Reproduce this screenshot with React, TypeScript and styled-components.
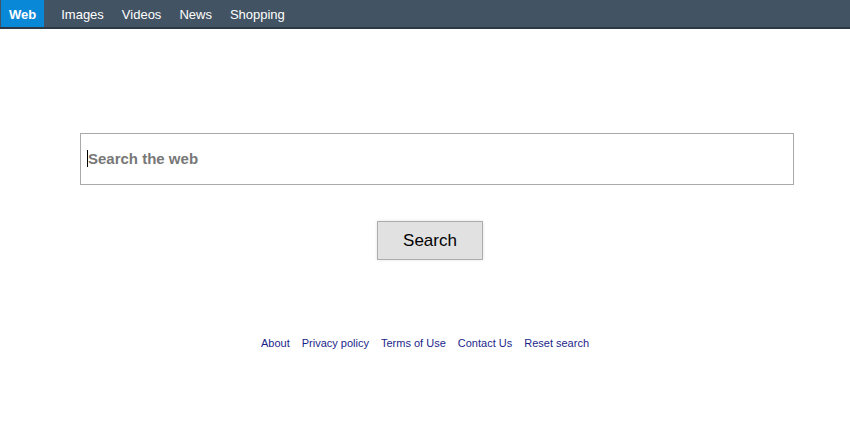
import React from 'react'
import styled, {createGlobalStyle} from 'styled-components'

const Global = createGlobalStyle`
    body {
        margin: 0;
        background: #fff;
        font-family: "Liberation Sans", Arial, sans-serif;
    }
`

const NavBar = styled.nav`
    display: flex;
    align-items: stretch;
    height: 27px;
    background: #425363;
    border-bottom: 2px solid #2c3843;
`

interface ITabProps {
    active?: boolean
}

const Tab = styled.a<ITabProps>`
    display: flex;
    align-items: center;
    padding: 1px ${p => (p.active ? '8px' : '9px')} 0;
    margin-left: ${p => (p.active ? '1px' : '0')};
    margin-right: ${p => (p.active ? '8px' : '0')};
    background: ${p => (p.active ? '#0a88d8' : 'transparent')};
    color: #fff;
    font-size: 13px;
    font-weight: ${p => (p.active ? 'bold' : 'normal')};
    text-decoration: none;
`

const Main = styled.main`
    display: flex;
    flex-direction: column;
    padding-top: 104px;
`

const SearchBox = styled.div`
    display: flex;
    align-items: center;
    box-sizing: border-box;
    margin-left: 80px;
    width: 714px;
    height: 52px;
    padding: 0 6px 2px;
    border: 1px solid #a9a9a9;
`

const Input = styled.input`
    flex: 1;
    border: none;
    outline: none;
    padding: 0;
    font-family: "Liberation Sans", Arial, sans-serif;
    font-size: 15px;
    font-weight: bold;
    color: #222;
    caret-color: #000;
    border-left: 1px solid #000;

    &::placeholder {
        color: #777;
    }
`

const ButtonRow = styled.div`
    display: flex;
    padding: 36px 0 0 377px;
`

const Button = styled.button`
    box-sizing: border-box;
    width: 106px;
    height: 39px;
    padding-top: 2px;
    background: #e1e1e1;
    border: 1px solid #adadad;
    box-shadow: 0 0 3px rgba(0, 0, 0, 0.12);
    font-family: "Liberation Sans", Arial, sans-serif;
    font-size: 17px;
    color: #000;
`

const Footer = styled.footer`
    display: flex;
    justify-content: center;
    gap: 12px;
    padding-top: 77px;
`

const FooterLink = styled.a`
    color: #1b1f8a;
    font-size: 11px;
    text-decoration: none;
`

const tabs = ['Images', 'Videos', 'News', 'Shopping']
const links = ['About', 'Privacy policy', 'Terms of Use', 'Contact Us', 'Reset search']

const App: React.FC = () => {
    return (
        <>
            <Global/>
            <NavBar>
                <Tab active>Web</Tab>
                {tabs.map(t => <Tab key={t}>{t}</Tab>)}
            </NavBar>
            <Main>
                <SearchBox>
                    <Input placeholder="Search the web"/>
                </SearchBox>
                <ButtonRow>
                    <Button>Search</Button>
                </ButtonRow>
                <Footer>
                    {links.map(l => <FooterLink key={l}>{l}</FooterLink>)}
                </Footer>
            </Main>
        </>
    )
}

export default App
